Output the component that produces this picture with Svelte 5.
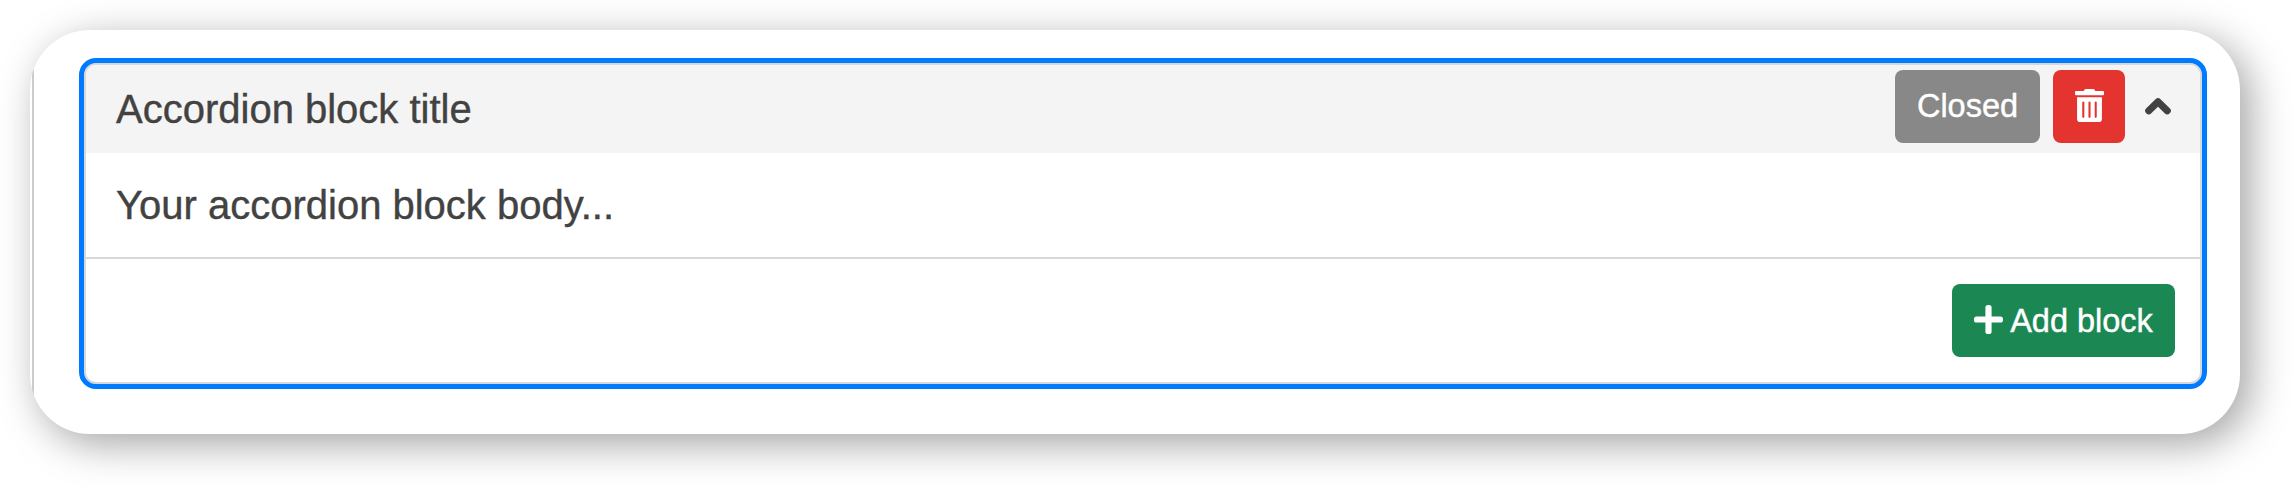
<script>
  let title = $state('Accordion block title');
  let body = $state('Your accordion block body...');
</script>

<main class="stage">
  <div class="card">
    <div class="rail">
      <section class="accordion">
        <header class="head">
          <span class="title">{title}</span>
          <div class="actions">
            <button class="btn closed" type="button">Closed</button>
            <button class="btn remove" type="button" aria-label="Delete">
              <svg width="29" height="33" viewBox="0 0 448 512" preserveAspectRatio="none" fill="currentColor">
                <path d="M32 464a48 48 0 0 0 48 48h288a48 48 0 0 0 48-48V128H32zm272-256a16 16 0 0 1 32 0v224a16 16 0 0 1-32 0zm-96 0a16 16 0 0 1 32 0v224a16 16 0 0 1-32 0zm-96 0a16 16 0 0 1 32 0v224a16 16 0 0 1-32 0zM432 32H312l-9.4-18.7A24 24 0 0 0 281.1 0H166.8a23.72 23.72 0 0 0-21.4 13.3L136 32H16A16 16 0 0 0 0 48v32a16 16 0 0 0 16 16h416a16 16 0 0 0 16-16V48a16 16 0 0 0-16-16z" />
              </svg>
            </button>
            <svg class="chevron" width="28" height="20" viewBox="0 0 28 20" fill="none" stroke="currentColor" stroke-width="7.2" stroke-linecap="round" stroke-linejoin="round">
              <path d="M4.8 13.8 14 4.8l9.2 9" />
            </svg>
          </div>
        </header>
        <div class="body">{body}</div>
        <footer class="foot">
          <button class="btn add" type="button">
            <svg width="29" height="29" viewBox="0 0 29 29" fill="currentColor">
              <rect x="11.4" y="0" width="6.2" height="29" rx="2.6" />
              <rect x="0" y="11.4" width="29" height="6.2" rx="2.6" />
            </svg>
            <span>Add block</span>
          </button>
        </footer>
      </section>
    </div>
  </div>
</main>

<style>
  :global(body) {
    margin: 0;
    background: #fff;
  }
  .stage {
    box-sizing: border-box;
    width: 2292px;
    height: 486px;
    padding: 30px;
    overflow: hidden;
    font-family: "Liberation Sans", Arial, sans-serif;
    color: #424242;
    -webkit-text-stroke: 0.4px currentColor;
  }
  .card {
    box-sizing: border-box;
    width: 2210px;
    height: 404px;
    padding-left: 2px;
    border-radius: 60px;
    background: #fff;
    overflow: hidden;
    box-shadow: 10px 10px 40px rgba(0, 0, 0, 0.36);
  }
  .rail {
    box-sizing: border-box;
    height: 100%;
    padding: 28px 33px 45px 45px;
    border-left: 2px solid #ccc;
  }
  .accordion {
    box-sizing: border-box;
    height: 331px;
    display: flex;
    flex-direction: column;
    border: 5px solid #007bff;
    border-radius: 17px;
    box-shadow: inset 0 0 0 2px #d8d8d8;
    padding: 2px;
  }
  .head {
    box-sizing: border-box;
    display: flex;
    align-items: flex-start;
    justify-content: space-between;
    height: 88px;
    padding: 5px 28.5px 0 30px;
    border-radius: 10px 10px 0 0;
    background: #f4f4f4;
  }
  .title {
    padding-top: 11px;
    font-size: 40px;
    line-height: 56px;
    white-space: nowrap;
  }
  .actions {
    display: flex;
    align-items: center;
  }
  .btn {
    box-sizing: border-box;
    display: flex;
    align-items: center;
    justify-content: center;
    height: 73px;
    margin: 0;
    padding: 0;
    border: 0;
    border-radius: 8px;
    color: #fff;
    font: 32.5px/40px "Liberation Sans", Arial, sans-serif;
    -webkit-text-stroke: 0.4px currentColor;
    white-space: nowrap;
  }
  .closed {
    width: 145px;
    padding-bottom: 2px;
    background: #888;
  }
  .remove {
    width: 72px;
    margin-left: 13px;
    padding-bottom: 2px;
    background: #e3342f;
  }
  .chevron {
    margin: 0 0 0 18.5px;
  }
  .body {
    box-sizing: border-box;
    height: 106px;
    padding: 24px 30px 0;
    border-bottom: 2px solid #d8d8d8;
    font-size: 40px;
    line-height: 56px;
  }
  .foot {
    display: flex;
    justify-content: flex-end;
    padding: 25px 25px 0 0;
  }
  .add {
    width: 223px;
    gap: 7px;
    background: #1b8854;
  }
  .add svg {
    margin-bottom: 2px;
  }
  svg {
    display: block;
    flex: none;
  }
</style>
